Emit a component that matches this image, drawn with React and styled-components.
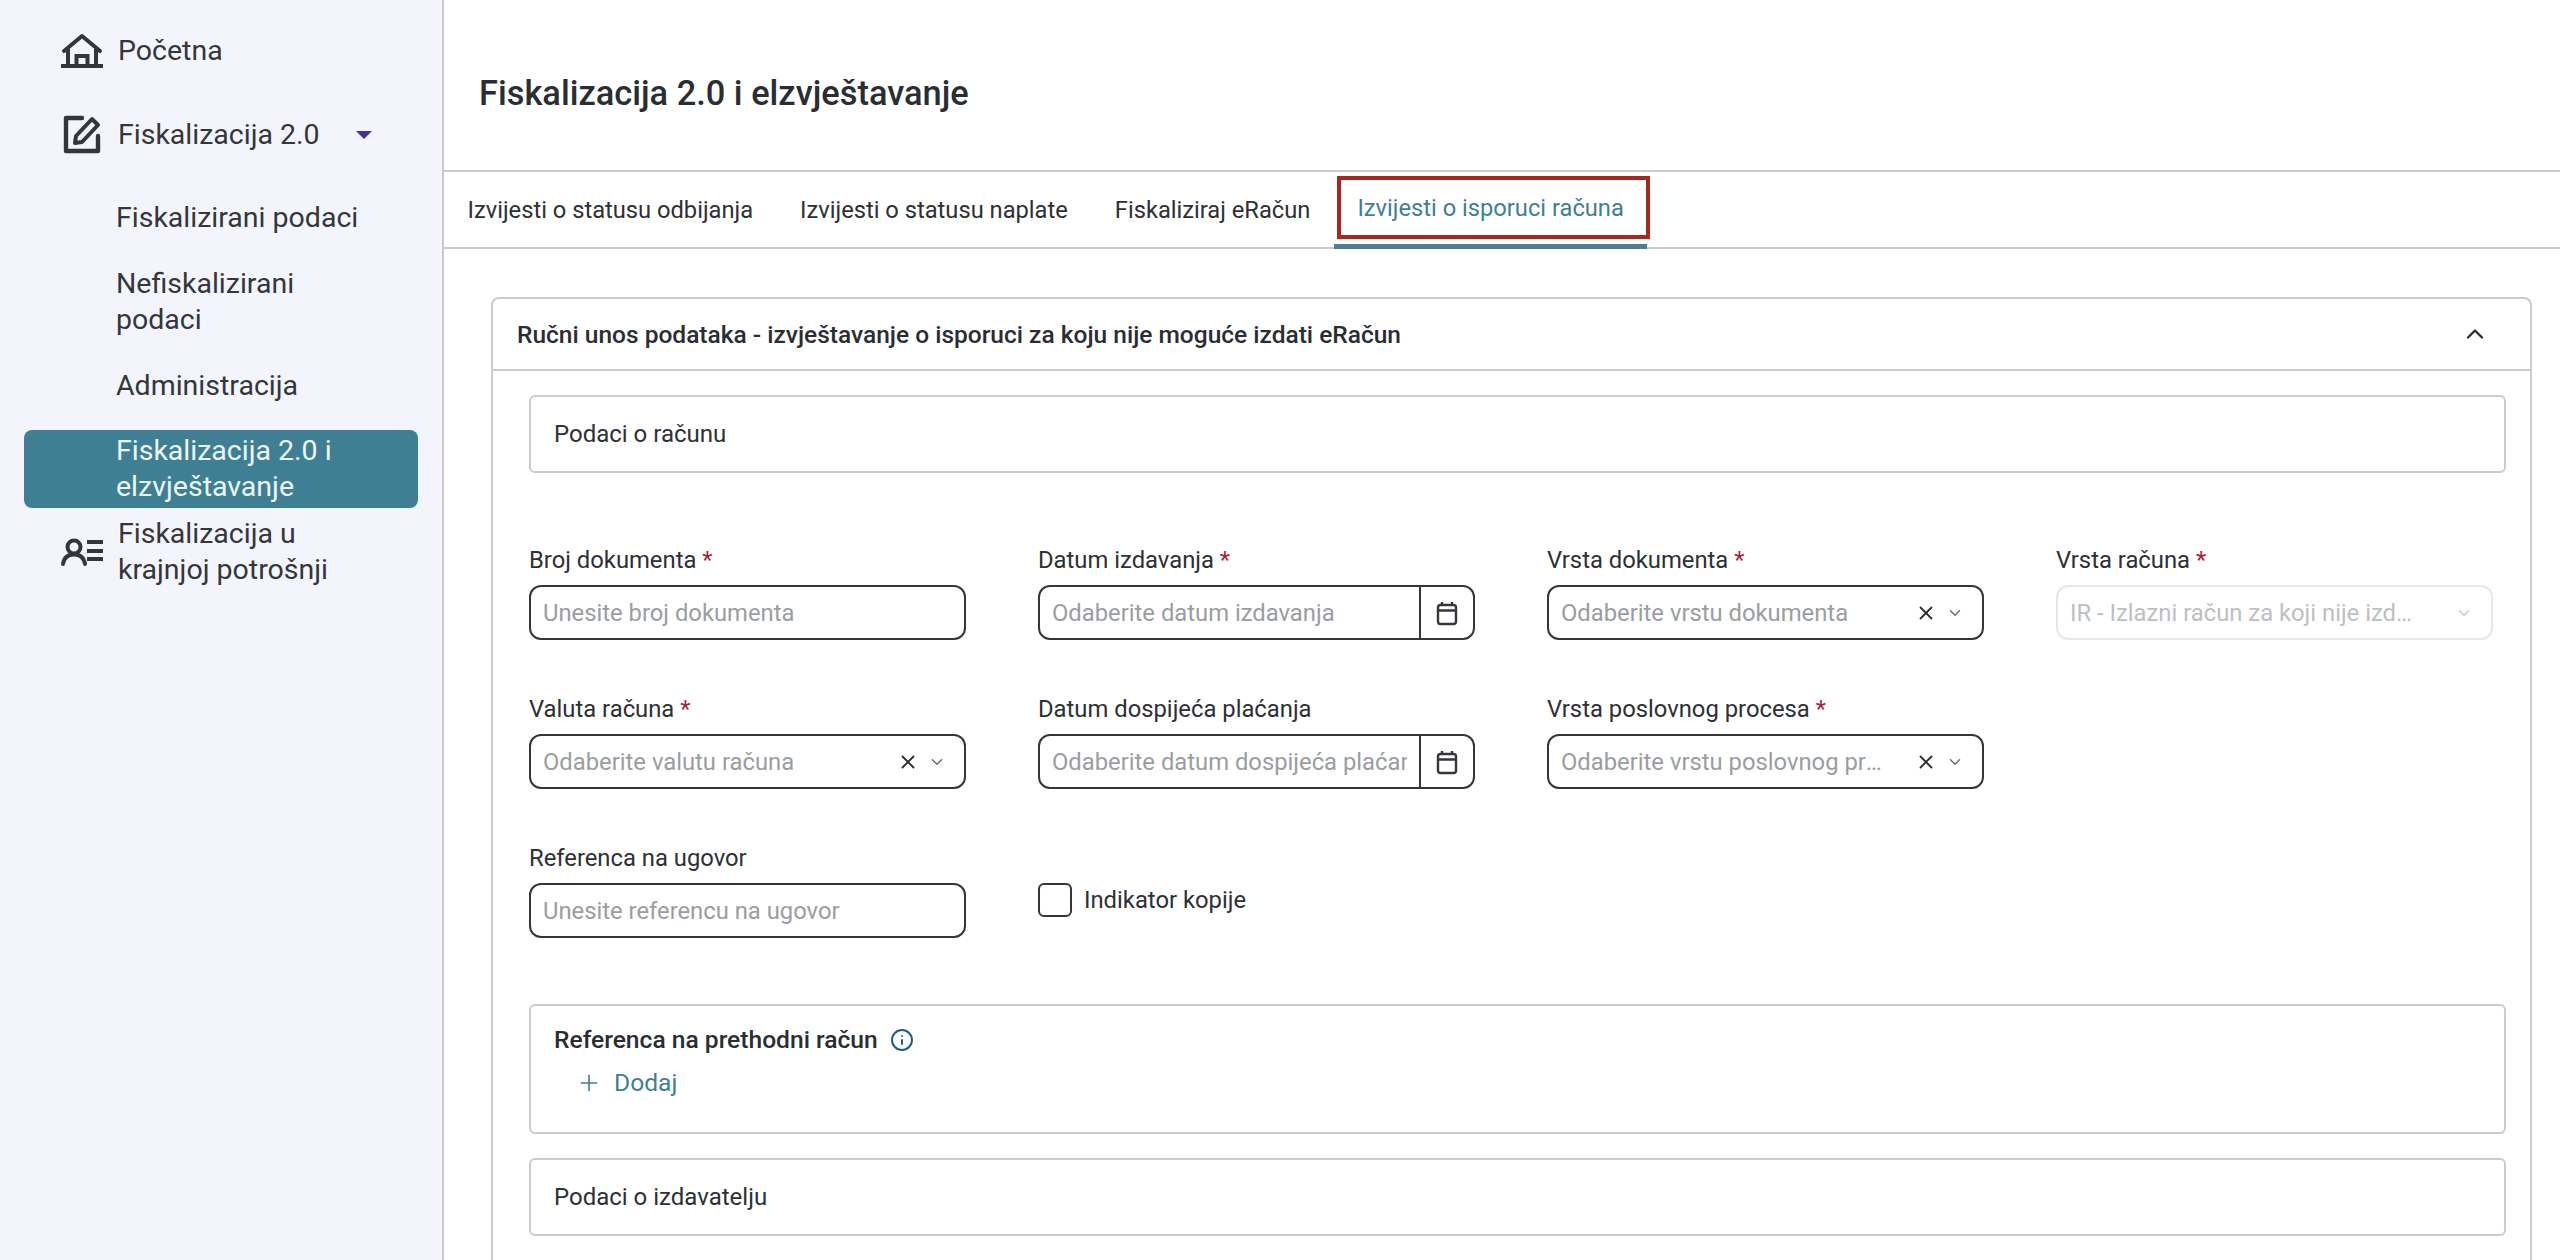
import React from 'react'
import styled, { createGlobalStyle } from 'styled-components'
import { ChevronDown, ChevronUp, Info, Plus, X } from 'lucide-react'

const GlobalStyle = createGlobalStyle`
  html, body {
    margin: 0;
    height: 1260px;
    overflow: hidden;
    background: #fff;
    font-family: Roboto, "Liberation Sans", sans-serif;
    color: #2b2e33;
  }
`

const Page = styled.div`
  display: flex;
  height: 1260px;
  overflow: hidden;
`

const Sidebar = styled.aside`
  flex: 0 0 441px;
  background: #f4f5fc;
  border-right: 2px solid #c6c8cc;
  padding-top: 26px;
  box-sizing: content-box;
`

const NavRow = styled.div`
  display: flex;
  align-items: center;
  height: ${({ $h }) => $h}px;
  margin-bottom: ${({ $mb }) => $mb || 0}px;
  padding-left: 60px;
  font-size: 28.5px;
  line-height: 36px;
  color: #33363b;
`

const NavIcon = styled.span`
  flex: 0 0 58px;
  display: flex;
  align-items: center;
`

const Caret = styled.span`
  width: 0;
  height: 0;
  margin-left: 36px;
  border-left: 8px solid transparent;
  border-right: 8px solid transparent;
  border-top: 8px solid #4a2c9a;
`

const SubItem = styled.div`
  margin: ${({ $mt }) => $mt || 0}px 24px 0;
  padding-left: 92px;
  padding-right: 47px;
  width: 394px;
  box-sizing: border-box;
  font-size: 28.5px;
  line-height: 36px;
  color: #33363b;
  border-radius: 8px;
  ${({ $active }) => $active && 'background: #3f7f94; color: #ecf7f9; padding-top: 3px; padding-bottom: 3px;'}
`

const Main = styled.main`
  flex: 1;
  min-width: 0;
`

const Header = styled.h1`
  margin: 0;
  height: 172px;
  box-sizing: border-box;
  display: flex;
  align-items: center;
  padding: 15px 0 0 35px;
  border-bottom: 2px solid #c9cbce;
  font-size: 34.4px;
  font-weight: 500;
  color: #2a2d31;
`

const Tabs = styled.nav`
  position: relative;
  display: flex;
  height: 77px;
  box-sizing: border-box;
  border-bottom: 2px solid #c9cbce;
`

const Tab = styled.div`
  position: relative;
  display: flex;
  align-items: center;
  height: 75px;
  padding: 0 23.5px;
  box-sizing: border-box;
  font-size: 23.7px;
  color: ${({ $active }) => ($active ? '#3f7f92' : '#2d3035')};
  ${({ $active }) => $active && 'border-bottom: 5px solid #4a7f94; margin-bottom: -2px; height: 77px; padding-bottom: 0;'}
`

const Highlight = styled.span`
  position: absolute;
  left: 3px;
  right: -3px;
  top: 4px;
  height: 63px;
  box-sizing: border-box;
  border: 4px solid #a8281b;
  pointer-events: none;
`

const Content = styled.div`
  padding: 48px 28px 0 47px;
`

const Panel = styled.section`
  border: 2px solid #c9cbce;
  border-radius: 8px 8px 0 0;
  height: 1000px;
`

const PanelHeader = styled.div`
  display: flex;
  align-items: center;
  justify-content: space-between;
  height: 70px;
  padding: 0 41px 0 24px;
  border-bottom: 2px solid #c9cbce;
  font-size: 24.5px;
  font-weight: 500;
  color: #2a2d31;
`

const PanelBody = styled.div`
  padding: 24px 24px 0 36px;
`

const Box = styled.div`
  border: 2px solid #c9cbce;
  border-radius: 6px;
  height: ${({ $h }) => $h}px;
  margin-top: ${({ $mt }) => $mt || 0}px;
  padding: ${({ $pt }) => $pt || 0}px 23px 0;
  box-sizing: border-box;
  font-size: 24px;
  display: ${({ $pt }) => ($pt ? 'block' : 'flex')};
  align-items: center;
  color: #2d3035;
`

const FieldGrid = styled.div`
  display: grid;
  grid-template-columns: repeat(4, 437px);
  column-gap: 72px;
  grid-auto-rows: 149px;
  margin-top: 71px;
`

const Field = styled.div`
  display: flex;
  flex-direction: column;
`

const Label = styled.label`
  font-size: 23.8px;
  line-height: 32px;
  color: #2d3035;
  margin-bottom: 9px;
`

const Star = styled.span`
  color: #a81c3c;
`

const Control = styled.div`
  display: flex;
  align-items: center;
  height: 55px;
  box-sizing: border-box;
  border: 2px solid ${({ $disabled }) => ($disabled ? '#e6e7e9' : '#33363b')};
  border-radius: 12px;
  padding-left: 12px;
  padding-right: ${({ $flush }) => ($flush ? 0 : 18)}px;
  overflow: hidden;
  color: ${({ $disabled }) => ($disabled ? '#bdbfc2' : '#9a9da1')};
  font-size: 23.8px;
`

const Placeholder = styled.span`
  flex: 1;
  min-width: 0;
  white-space: nowrap;
  overflow: hidden;
  text-overflow: ${({ $clip }) => ($clip ? 'clip' : 'ellipsis')};
`

const CalendarButton = styled.span`
  flex: 0 0 52px;
  align-self: stretch;
  margin-left: 12px;
  border-left: 2px solid #33363b;
  display: flex;
  align-items: center;
  justify-content: center;
  color: #33363b;
`

const ClearIcon = styled(X)`
  flex: none;
  margin-left: 24px;
  color: #2a2d31;
`

const Chevron = styled(ChevronDown)`
  flex: none;
  margin-left: ${({ $disabled }) => ($disabled ? 34 : 9)}px;
  color: ${({ $disabled }) => ($disabled ? '#c9cbce' : '#6d7075')};
`

const CheckRow = styled.div`
  display: flex;
  align-items: center;
  align-self: start;
  gap: 12px;
  margin-top: 41px;
  font-size: 23.8px;
  color: #2d3035;
`

const Check = styled.span`
  width: 34px;
  height: 34px;
  box-sizing: border-box;
  border: 2px solid #33363b;
  border-radius: 6px;
`

const BoxTitle = styled.div`
  display: flex;
  align-items: center;
  gap: 12px;
  font-size: 24.6px;
  font-weight: 500;
  line-height: 32px;
  color: #2a2d31;
`

const AddLink = styled.div`
  display: flex;
  align-items: center;
  gap: 12px;
  margin: 11px 0 0 22px;
  font-size: 24.6px;
  line-height: 32px;
  color: #3f7f92;
`

const HomeIcon = () => (
  <svg width="44" height="36" viewBox="0 0 44 36" fill="none" stroke="#33363b" strokeWidth="4">
    <path d="M4 18 22 3l18 15" strokeLinejoin="round" strokeLinecap="round" />
    <path d="M8 16v17M36 16v17M1 33h42" />
    <path d="M16.5 33V23h11v10" />
  </svg>
)

const EditIcon = () => (
  <svg width="44" height="42" viewBox="0 0 44 42" fill="none" stroke="#33363b" strokeWidth="4.4" strokeLinejoin="round" strokeLinecap="round">
    <path d="M22 4H6v33h32V22" />
    <path d="M32 5l6 6-16 17-7 1 1-7z" strokeWidth="4" />
  </svg>
)

const PersonListIcon = () => (
  <svg width="44" height="30" viewBox="0 0 44 30" fill="none" stroke="#33363b" strokeWidth="4" strokeLinecap="round">
    <circle cx="14" cy="10" r="6.5" />
    <path d="M3 27c1-6 5-9.5 11-9.5s10 3.500 11 9.500" />
    <path d="M27 5h16M27 14h16M27 22h16" strokeLinecap="butt" />
  </svg>
)

const CalendarIcon = () => (
  <svg width="24" height="26" viewBox="0 0 24 26" fill="none" stroke="currentColor" strokeWidth="2.4">
    <rect x="3" y="5" width="18" height="19" rx="2.5" />
    <path d="M3 10.500h18M7 2v4M17 2v4" />
  </svg>
)

const Input = ({ label, required, placeholder }) => (
  <Field>
    <Label>
      {label}
      {required && <Star> *</Star>}
    </Label>
    <Control>
      <Placeholder>{placeholder}</Placeholder>
    </Control>
  </Field>
)

const DateInput = ({ label, required, placeholder }) => (
  <Field>
    <Label>
      {label}
      {required && <Star> *</Star>}
    </Label>
    <Control $flush>
      <Placeholder $clip>{placeholder}</Placeholder>
      <CalendarButton>
        <CalendarIcon />
      </CalendarButton>
    </Control>
  </Field>
)

const Select = ({ label, required, placeholder, disabled }) => (
  <Field>
    <Label>
      {label}
      {required && <Star> *</Star>}
    </Label>
    <Control $disabled={disabled}>
      <Placeholder>{placeholder}</Placeholder>
      {!disabled && <ClearIcon size={22} strokeWidth={2} />}
      <Chevron size={18} $disabled={disabled} />
    </Control>
  </Field>
)

const App = () => (
  <Page>
    <GlobalStyle />
    <Sidebar>
      <NavRow $h={50} $mb={34}>
        <NavIcon><HomeIcon /></NavIcon>
        Početna
      </NavRow>
      <NavRow $h={50}>
        <NavIcon><EditIcon /></NavIcon>
        Fiskalizacija 2.0
        <Caret />
      </NavRow>
      <SubItem $mt={40}>Fiskalizirani podaci</SubItem>
      <SubItem $mt={30}>Nefiskalizirani podaci</SubItem>
      <SubItem $mt={30}>Administracija</SubItem>
      <SubItem $mt={26} $active>Fiskalizacija 2.0 i elzvještavanje</SubItem>
      <NavRow $h={88}>
        <NavIcon><PersonListIcon /></NavIcon>
        <span>Fiskalizacija u<br />krajnjoj potrošnji</span>
      </NavRow>
    </Sidebar>
    <Main>
      <Header>Fiskalizacija 2.0 i elzvještavanje</Header>
      <Tabs>
        <Tab>Izvijesti o statusu odbijanja</Tab>
        <Tab>Izvijesti o statusu naplate</Tab>
        <Tab>Fiskaliziraj eRačun</Tab>
        <Tab $active>
          Izvijesti o isporuci računa
          <Highlight />
        </Tab>
      </Tabs>
      <Content>
        <Panel>
          <PanelHeader>
            Ručni unos podataka - izvještavanje o isporuci za koju nije moguće izdati eRačun
            <ChevronUp size={28} color="#2a2d31" />
          </PanelHeader>
          <PanelBody>
            <Box $h={78}>Podaci o računu</Box>
            <FieldGrid>
              <Input label="Broj dokumenta" required placeholder="Unesite broj dokumenta" />
              <DateInput label="Datum izdavanja" required placeholder="Odaberite datum izdavanja" />
              <Select label="Vrsta dokumenta" required placeholder="Odaberite vrstu dokumenta" />
              <Select label="Vrsta računa" required disabled placeholder="IR - Izlazni račun za koji nije izdan eRačun" />
              <Select label="Valuta računa" required placeholder="Odaberite valutu računa" />
              <DateInput label="Datum dospijeća plaćanja" placeholder="Odaberite datum dospijeća plaćanja" />
              <Select label="Vrsta poslovnog procesa" required placeholder="Odaberite vrstu poslovnog procesa" />
              <span />
              <Input label="Referenca na ugovor" placeholder="Unesite referencu na ugovor" />
              <CheckRow>
                <Check />
                Indikator kopije
              </CheckRow>
            </FieldGrid>
            <Box $h={130} $mt={13} $pt={18}>
              <BoxTitle>
                Referenca na prethodni račun
                <Info size={24} color="#1f5f86" />
              </BoxTitle>
              <AddLink>
                <Plus size={26} strokeWidth={1.5} />
                Dodaj
              </AddLink>
            </Box>
            <Box $h={78} $mt={24}>Podaci o izdavatelju</Box>
          </PanelBody>
        </Panel>
      </Content>
    </Main>
  </Page>
)

export default App
